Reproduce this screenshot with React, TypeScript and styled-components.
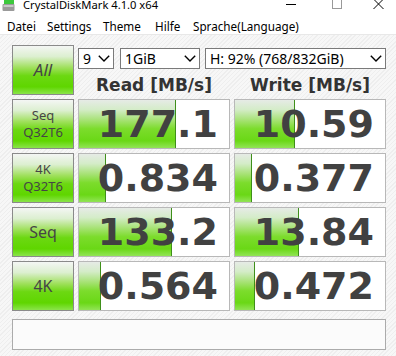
import React from "react";
import styled, { createGlobalStyle } from "styled-components";

const GlobalStyle = createGlobalStyle`
  html, body { margin: 0; padding: 0; background: #ffffff; }
  body { width: 396px; height: 356px; overflow: hidden; font-family: "Noto Sans", "Open Sans", sans-serif; }
`;

const Window = styled.div`
  width: 396px;
  height: 356px;
  display: flex;
  flex-direction: column;
  background: #ffffff;
`;

const TitleBar = styled.div`
  height: 17px;
  display: flex;
  align-items: flex-start;
  background: #ffffff;
`;

const TitleIcon = styled.svg`
  margin-left: 2px;
  flex: none;
`;

const TitleText = styled.div`
  margin-left: 8px;
  margin-top: 0;
  font-size: 11.2px;
  line-height: 10px;
  padding-bottom: 3px;
  color: #000;
  font-family: "Noto Sans", sans-serif;
`;

const Controls = styled.div`
  margin-left: auto;
  display: flex;
  align-items: flex-start;
`;

const ControlBtn = styled.div<{ $w: number }>`
  width: ${(p) => p.$w}px;
  height: 12px;
  display: flex;
  align-items: flex-start;
  justify-content: center;
`;

const MenuBar = styled.div`
  height: 17px;
  display: flex;
  align-items: center;
  padding-left: 7px;
  background: #ffffff;
  border-bottom: 1px solid #e8e8e8;
`;

const MenuItem = styled.div<{ $w: number }>`
  width: ${(p) => p.$w}px;
  font-size: 11.7px;
  line-height: 17px;
  padding-top: 2px;
  color: #000;
`;

const Main = styled.div`
  flex: 1;
  padding: 10px 10px 0 12px;
  background-color: #f4f4f4;
  background-image: repeating-linear-gradient(
    135deg,
    #f7f7f7 0px,
    #f7f7f7 2px,
    #eeeeee 2px,
    #eeeeee 3px
  );
`;

const Grid = styled.div`
  display: grid;
  grid-template-columns: 62px 152px 152px;
  grid-auto-rows: 50px;
  column-gap: 4px;
  row-gap: 4px;
`;

const TestButton = styled.div<{ $size: number; $italic?: boolean }>`
  box-sizing: border-box;
  border: 1px solid #8a8a8a;
  background: linear-gradient(
    to bottom,
    #f4f6f4 0%,
    #dcefd0 22%,
    #9fe05c 45%,
    #6cd812 62%,
    #5fd600 85%,
    #8ae44a 100%
  );
  display: flex;
  flex-direction: column;
  align-items: center;
  justify-content: center;
  color: #454545;
  font-size: ${(p) => p.$size}px;
  line-height: ${(p) => Math.round(p.$size * 1.3)}px;
  font-style: ${(p) => (p.$italic ? "italic" : "normal")};
`;

const HeaderCell = styled.div`
  grid-column: 2 / 4;
  display: flex;
  flex-direction: column;
`;

const SelectRow = styled.div`
  margin-top: 3px;
  display: flex;
`;

const Select = styled.div<{ $w: number; $ml: number }>`
  box-sizing: border-box;
  width: ${(p) => p.$w}px;
  margin-left: ${(p) => p.$ml}px;
  height: 21px;
  border: 1px solid #7a7a7a;
  background: #ffffff;
  display: flex;
  align-items: center;
  padding: 0 3px 0 4px;
  font-size: 14px;
  color: #000;
  font-family: "Noto Sans", sans-serif;
`;

const SelectText = styled.span`
  flex: 1;
  white-space: nowrap;
  line-height: 19px;
`;

const LabelRow = styled.div`
  display: grid;
  grid-template-columns: 152px 152px;
  column-gap: 4px;
  margin-top: 6px;
`;

const ColLabel = styled.div`
  text-align: center;
  font-family: "DejaVu Sans", sans-serif;
  font-weight: bold;
  font-size: 17px;
  line-height: 20px;
  color: #333333;
`;

const ValueBox = styled.div`
  box-sizing: border-box;
  position: relative;
  border: 1px solid #b8b8b8;
  background: #ffffff;
  overflow: hidden;
  display: flex;
  align-items: center;
  justify-content: flex-end;
  padding-right: 11px;
`;

const Bar = styled.div`
  position: absolute;
  left: 0;
  top: 0;
  bottom: 0;
  box-sizing: border-box;
  border-right: 1px solid #3f8f1a;
  background: linear-gradient(
    to bottom,
    #e6ebe6 0%,
    #d4ecc8 20%,
    #a6e274 42%,
    #7cdc2c 60%,
    #6ad816 85%,
    #92e456 100%
  );
`;

const ValueText = styled.span`
  position: relative;
  font-family: "DejaVu Sans", sans-serif;
  font-weight: bold;
  font-size: 38px;
  line-height: 44px;
  color: #414141;
`;

const Comment = styled.div`
  box-sizing: border-box;
  margin-top: 8px;
  width: 374px;
  height: 31px;
  border: 1px solid #ababab;
  background: #fbfbfb;
`;

const Chevron = () => (
  <svg width="12" height="7" viewBox="0 0 12 7">
    <path d="M0.8 0.8 L6 6 L11.2 0.8" fill="none" stroke="#000" strokeWidth="1.4" />
  </svg>
);

type Row = { label: string[]; size: number; read: string; write: string; rw: number; ww: number };

const rows: Row[] = [
  { label: ["Seq", "Q32T6"], size: 13, read: "177.1", write: "10.59", rw: 97, ww: 60 },
  { label: ["4K", "Q32T6"], size: 13, read: "0.834", write: "0.377", rw: 27, ww: 17 },
  { label: ["Seq"], size: 16, read: "133.2", write: "13.84", rw: 93, ww: 64 },
  { label: ["4K"], size: 16, read: "0.564", write: "0.472", rw: 22, ww: 20 },
];

export default function App() {
  return (
    <Window>
      <GlobalStyle />
      <TitleBar>
        <TitleIcon width="13" height="12" viewBox="0 0 13 12">
          <rect x="2" y="0" width="10" height="4" fill="#3cc83c" />
          <rect x="0.5" y="4" width="12" height="7" rx="1" fill="#9a9a9a" />
          <rect x="1.5" y="5" width="10" height="2" fill="#c8c8c8" />
        </TitleIcon>
        <TitleText>CrystalDiskMark 4.1.0 x64</TitleText>
        <Controls>
          <ControlBtn $w={46}>
            <svg width="10" height="10" viewBox="0 0 10 10">
              <line x1="0" y1="4.5" x2="10" y2="4.5" stroke="#000" strokeWidth="1" />
            </svg>
          </ControlBtn>
          <ControlBtn $w={46}>
            <svg width="10" height="10" viewBox="0 0 10 10">
              <rect x="0.5" y="-2" width="9" height="10.5" fill="none" stroke="#999" strokeWidth="1" />
            </svg>
          </ControlBtn>
          <ControlBtn $w={36}>
            <svg width="11" height="10" viewBox="0 0 11 10">
              <path d="M0.5 -1 L10.5 9 M10.5 -1 L0.5 9" stroke="#000" strokeWidth="1" />
            </svg>
          </ControlBtn>
        </Controls>
      </TitleBar>
      <MenuBar>
        <MenuItem $w={40}>Datei</MenuItem>
        <MenuItem $w={56}>Settings</MenuItem>
        <MenuItem $w={52}>Theme</MenuItem>
        <MenuItem $w={38}>Hilfe</MenuItem>
        <MenuItem $w={120}>Sprache(Language)</MenuItem>
      </MenuBar>
      <Main>
        <Grid>
          <TestButton $size={17} $italic>All</TestButton>
          <HeaderCell>
            <SelectRow>
              <Select $w={36} $ml={0}>
                <SelectText>9</SelectText>
                <Chevron />
              </Select>
              <Select $w={80} $ml={6}>
                <SelectText>1GiB</SelectText>
                <Chevron />
              </Select>
              <Select $w={181} $ml={5}>
                <SelectText>H: 92% (768/832GiB)</SelectText>
                <Chevron />
              </Select>
            </SelectRow>
            <LabelRow>
              <ColLabel>Read [MB/s]</ColLabel>
              <ColLabel>Write [MB/s]</ColLabel>
            </LabelRow>
          </HeaderCell>
          {rows.map((r) => (
            <React.Fragment key={r.label.join("-")}>
              <TestButton $size={r.size}>
                {r.label.map((l) => (
                  <span key={l}>{l}</span>
                ))}
              </TestButton>
              <ValueBox>
                <Bar style={{ width: `${r.rw}px` }} />
                <ValueText>{r.read}</ValueText>
              </ValueBox>
              <ValueBox>
                <Bar style={{ width: `${r.ww}px` }} />
                <ValueText>{r.write}</ValueText>
              </ValueBox>
            </React.Fragment>
          ))}
        </Grid>
        <Comment />
      </Main>
    </Window>
  );
}
